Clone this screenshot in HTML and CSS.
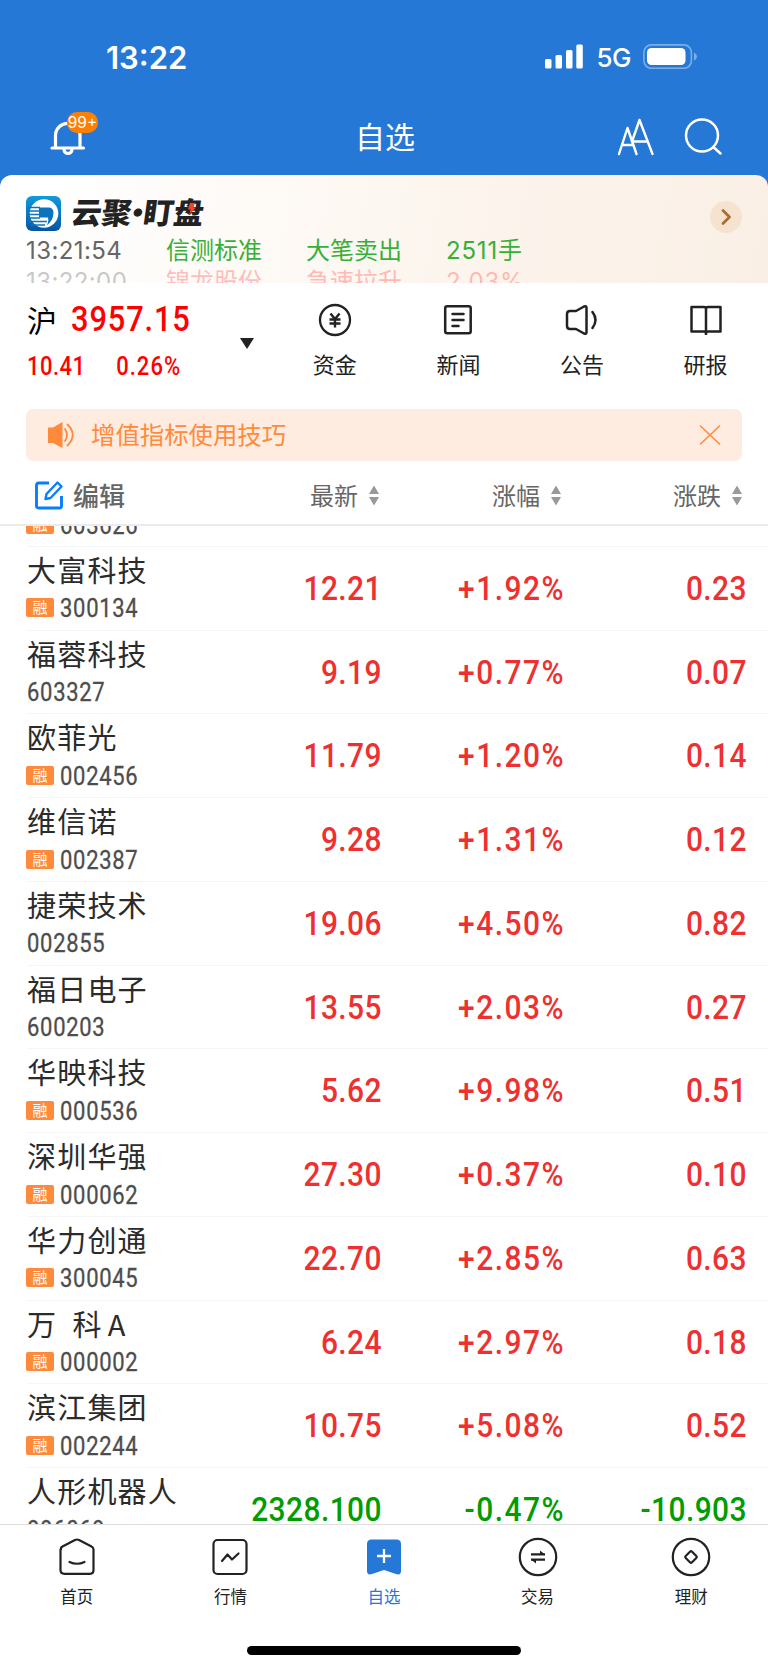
FILE: index.html
```html
<!DOCTYPE html>
<html lang="zh-CN">
<head>
    <meta charset="UTF-8">
    <meta name="viewport" content="width=device-width, initial-scale=1.0">
    <title>自选</title>
    <link rel="stylesheet" href="styles.css">
</head>
<body>
    <header class="top">
        <div class="status-bar">
            <span class="clock">13:22</span>
            <div class="status-right">
                <svg class="signal" width="38" height="25" viewBox="0 0 38 25" fill="#fff">
                    <rect x="0" y="15" width="6.5" height="9.5" rx="1.5"/>
                    <rect x="10.5" y="11" width="6.5" height="13.5" rx="1.5"/>
                    <rect x="21" y="6" width="6.5" height="18.5" rx="1.5"/>
                    <rect x="31.3" y="0.5" width="6.5" height="24" rx="1.5"/>
                </svg>
                <span class="network">5G</span>
                <svg width="54" height="25" viewBox="0 0 54 25">
                    <rect x="0.9" y="0.9" width="47.5" height="23.4" rx="7.5" fill="none" stroke="#fff" stroke-opacity="0.4" stroke-width="1.6"/>
                    <rect x="4" y="4" width="38.5" height="17" rx="4.5" fill="#fff"/>
                    <path d="M51 8.5q3 1.500 3 4t-3 4z" fill="#fff" fill-opacity="0.4"/>
                </svg>
            </div>
        </div>
        <div class="nav-bar">
            <div class="bell">
                <svg width="36" height="36" viewBox="0 0 36 36" fill="none" stroke="#fff" stroke-width="3.2" stroke-linecap="round">
                    <path d="M5.500 28V14.500A12.300 12.300 0 0 1 30 14.500V28M2 28h31.500"/>
                    <path d="M14 29.500a4 4 0 0 0 8 0"/>
                </svg>
                <span class="badge">99+</span>
            </div>
            <h1>自选</h1>
            <div class="nav-icons">
                <svg width="38" height="38" viewBox="0 0 38 38" fill="none" stroke="#fff" stroke-width="2.4" stroke-linecap="round" stroke-linejoin="round">
                    <path d="M3 36L11.500 10L20.500 36M6.500 27H17"/>
                    <path d="M16 23.500L23.500 2L36.500 36M17 23.500H31"/>
                </svg>
                <svg width="38" height="38" viewBox="0 0 38 38" fill="none" stroke="#fff" stroke-width="2.5" stroke-linecap="round">
                    <circle cx="18" cy="17.500" r="16"/>
                    <path d="M29.300 29L36.500 35.500"/>
                </svg>
            </div>
        </div>
    </header>

    <section class="promo">
        <div class="promo-title">
            <svg width="35" height="35" viewBox="0 0 35 35">
                <defs>
                    <linearGradient id="logo-bg" x1="0" y1="0" x2="0" y2="1">
                        <stop offset="0" stop-color="#0f9bdc"/>
                        <stop offset="1" stop-color="#0554a4"/>
                    </linearGradient>
                </defs>
                <rect width="35" height="35" rx="6" fill="url(#logo-bg)"/>
                <circle cx="18" cy="17.500" r="14.300" fill="#fff"/>
                <path d="M13 11.500H22.500Q27.500 11.500 27.500 17Q27 25.500 20.500 29.500Q23 26 22 21.500H13z" fill="#0a74bf"/>
                <path d="M2 11.500H14M2 15H14M2 18.500H14M2 22H14M3 25.500H21M5 29H19" stroke="#0a74bf" stroke-width="1.300"/>
            </svg>
            <strong class="promo-name">云聚<b>·</b>盯盘</strong>
            <svg class="bolt" width="8" height="12" viewBox="0 0 8 12"><path d="M2 0H7L5.500 4.500H8L1 12L3 6.500H0z" fill="#f5442e"/></svg>
        </div>
        <div class="promo-row sell"><time>13:21:54</time><span>信测标准</span><span>大笔卖出</span><span>2511手</span></div>
        <div class="promo-row buy"><time>13:22:00</time><span>锦龙股份</span><span>急速拉升</span><span>2.03%</span></div>
        <svg class="promo-more" width="32" height="32" viewBox="0 0 32 32" fill="none">
            <circle cx="16" cy="16" r="16" fill="#f5e3cf"/>
            <path d="M13 9.500L19.500 16L13 22.500" stroke="#aa6e32" stroke-width="2.800" stroke-linecap="round" stroke-linejoin="round"/>
        </svg>
    </section>

    <section class="market">
        <div class="index">
            <div class="index-main"><span class="index-name">沪</span><span class="index-value">3957.15</span></div>
            <div class="index-sub"><span>10.41</span><span>0.26%</span></div>
        </div>
        <div class="index-arrow"></div>
        <div class="shortcuts">
            <a class="shortcut">
                <svg width="36" height="36" viewBox="0 0 36 36" fill="none" stroke="#222" stroke-width="2.300">
                    <circle cx="18" cy="18" r="15"/>
                    <path d="M13.500 11.500L18 17L22.500 11.500M18 17V25.500M12.500 17.500H23.500M12.500 21.500H23.500" stroke-width="2.400"/>
                </svg>
                <span>资金</span>
            </a>
            <a class="shortcut">
                <svg width="36" height="36" viewBox="0 0 36 36" fill="none" stroke="#222" stroke-width="2.500" stroke-linecap="round">
                    <rect x="5.200" y="4.200" width="25.500" height="27" rx="2"/>
                    <path d="M12.500 12H23.500M12.500 18H23.500M12.500 24H18.500"/>
                </svg>
                <span>新闻</span>
            </a>
            <a class="shortcut">
                <svg width="36" height="36" viewBox="0 0 36 36" fill="none" stroke="#222" stroke-width="2.500" stroke-linecap="round" stroke-linejoin="round">
                    <path d="M3 12Q3 9 6 9H12L20 4.500Q22.500 3.500 22.500 6V30Q22.500 32.500 20 31.500L12 27H6Q3 27 3 24z"/>
                    <path d="M28.500 10Q34.500 18 28.500 26"/>
                </svg>
                <span>公告</span>
            </a>
            <a class="shortcut">
                <svg width="36" height="36" viewBox="0 0 36 36" fill="none" stroke="#222" stroke-width="2.500" stroke-linejoin="round">
                    <path d="M18 7Q18 5 16 5H3.500V29.500H16Q18 29.500 18 31.500Q18 29.500 20 29.500H32.500V5H20Q18 5 18 7V33"/>
                </svg>
                <span>研报</span>
            </a>
        </div>
    </section>

    <div class="notice">
        <svg width="28" height="28" viewBox="0 0 28 28" fill="#ff8a3c">
            <path d="M1 6.500H6L15.500 1V27L6 22H1z"/>
            <path d="M18 8Q22 14 18 20M20.500 3.500Q31 14 20.500 24.500" fill="none" stroke="#ff8a3c" stroke-width="1.800" stroke-linecap="round"/>
        </svg>
        <span>增值指标使用技巧</span>
        <svg class="close" width="22" height="20" viewBox="0 0 22 20" fill="none" stroke="#ff8a3c" stroke-width="1.600" stroke-linecap="round"><path d="M1.500 1L20.500 19M20.500 1L1.500 19"/></svg>
    </div>

    <div class="list-head">
        <div class="edit">
            <svg width="30" height="30" viewBox="0 0 30 30" fill="none" stroke="#0a7dff" stroke-width="2.900" stroke-linejoin="round">
                <path d="M15 3H5Q2.500 3 2.500 5.500V26Q2.500 28 5 28H25.500Q27.500 28 27.500 26V16"/>
                <path d="M23.500 2.500L27.500 6.500L16.500 18L11.500 19L12.500 14z" stroke-width="2.400"/>
            </svg>
            <span>编辑</span>
        </div>
        <div class="sort col-price">最新<i></i></div>
        <div class="sort col-pct">涨幅<i></i></div>
        <div class="sort col-change">涨跌<i></i></div>
    </div>

    <main class="stocks" id="stocks"></main>

    <nav class="tabs">
        <a class="tab">
            <svg width="40" height="40" viewBox="0 0 40 40" fill="none" stroke="#222" stroke-width="2.200" stroke-linecap="round">
                <path d="M4 12.500Q3.500 10.500 5.500 9.500L18 3Q20 2 22 3L34.500 9.500Q36.500 10.500 36.500 12.500V33Q36.500 36.800 33 36.800H7.500Q3.500 36.800 3.500 33V12.500"/>
                <path d="M12.500 25Q20 28.500 27.500 25"/>
            </svg>
            <span>首页</span>
        </a>
        <a class="tab">
            <svg width="40" height="40" viewBox="0 0 40 40" fill="none" stroke="#222" stroke-width="2.200" stroke-linecap="round" stroke-linejoin="round">
                <rect x="3.500" y="3" width="33" height="34" rx="4"/>
                <path d="M12 24L17.500 17.500L22 22.500L28.500 16.500"/>
            </svg>
            <span>行情</span>
        </a>
        <a class="tab active">
            <svg width="40" height="40" viewBox="0 0 40 40">
                <path d="M3 7Q3 2.500 7.500 2.500H32.500Q37 2.500 37 7V34Q37 38.500 32 37L20 33L8 37Q3 38.500 3 34z" fill="#2678d6"/>
                <path d="M13 19H27M20 12V26" stroke="#fff" stroke-width="2.300"/>
            </svg>
            <span>自选</span>
        </a>
        <a class="tab">
            <svg width="40" height="40" viewBox="0 0 40 40" fill="none" stroke="#222" stroke-width="2.200">
                <circle cx="20" cy="20" r="18.200"/>
                <path d="M13 17.300H27M27 22.700H13"/>
                <path d="M22 13.500L27 17.500H22zM18 26.500L13 22.500H18z" fill="#222" stroke="none"/>
            </svg>
            <span>交易</span>
        </a>
        <a class="tab">
            <svg width="40" height="40" viewBox="0 0 40 40" fill="none" stroke="#222" stroke-width="2.200" stroke-linejoin="round">
                <circle cx="20" cy="20" r="18.200"/>
                <rect x="15.500" y="15.500" width="9" height="9" rx="1.500" transform="rotate(45 20 20)"/>
            </svg>
            <span>理财</span>
        </a>
    </nav>
    <div class="home-bar"></div>

    <script>
        // name, code, margin trading flag, price, percent, change
        const stocks = [
            ["", "603626", true, "", "", ""],
            ["大富科技", "300134", true, "12.21", "+1.92%", "0.23"],
            ["福蓉科技", "603327", false, "9.19", "+0.77%", "0.07"],
            ["欧菲光", "002456", true, "11.79", "+1.20%", "0.14"],
            ["维信诺", "002387", true, "9.28", "+1.31%", "0.12"],
            ["捷荣技术", "002855", false, "19.06", "+4.50%", "0.82"],
            ["福日电子", "600203", false, "13.55", "+2.03%", "0.27"],
            ["华映科技", "000536", true, "5.62", "+9.98%", "0.51"],
            ["深圳华强", "000062", true, "27.30", "+0.37%", "0.10"],
            ["华力创通", "300045", true, "22.70", "+2.85%", "0.63"],
            ["万  科<em>A</em>", "000002", true, "6.24", "+2.97%", "0.18"],
            ["滨江集团", "002244", true, "10.75", "+5.08%", "0.52"],
            ["人形机器人", "886069", false, "2328.100", "-0.47%", "-10.903"]
        ];

        document.getElementById("stocks").innerHTML = stocks.map(([name, code, margin, price, pct, change]) => `
            <div class="stock ${pct.startsWith("-") ? "down" : ""}">
                <div class="who">
                    <div class="name">${name}</div>
                    <div class="code">${margin ? '<span class="tag">融</span>' : ""}<span class="num">${code}</span></div>
                </div>
                <div class="num val col-price">${price}</div>
                <div class="num val col-pct">${pct}</div>
                <div class="num val col-change">${change}</div>
            </div>`).join("");
    </script>
</body>
</html>
```
FILE: styles.css
```css
* {
    box-sizing: border-box;
}
body {
    margin: 0;
    width: 768px;
    height: 1669px;
    overflow: hidden;
    display: flex;
    flex-direction: column;
    background: #fff;
    color: #222;
    font-family: "Noto Sans CJK SC", sans-serif;
}
svg {
    display: block;
    flex: none;
}
.top {
    flex: none;
    height: 187px;
    margin-bottom: -12px;
    background: #2678d6;
    color: #fff;
}
.status-bar {
    display: flex;
    justify-content: space-between;
    height: 98px;
    padding: 42px 71px 0 106px;
}
.clock {
    font: 600 31px/32px Inter, sans-serif;
}
.status-right {
    display: flex;
    height: 29px;
    align-items: center;
}
.network {
    margin: 3px 12px 0 13px;
    font: 500 26px/26px Inter, sans-serif;
    letter-spacing: -0.5px;
}
.nav-bar {
    display: grid;
    grid-template-columns: 1fr auto 1fr;
    align-items: center;
    height: 77px;
    padding: 0 46px 0 50px;
}
.bell {
    position: relative;
    padding-top: 3px;
}
.badge {
    position: absolute;
    left: 17px;
    top: -5px;
    width: 31px;
    height: 21px;
    border-radius: 10px;
    background: #ff8000;
    font: 15.5px/22px Inter, sans-serif;
    text-align: center;
}
h1 {
    margin: 0 2px 4px 0;
    font-size: 30px;
    font-weight: 400;
    line-height: 40px;
}
.nav-icons {
    display: flex;
    justify-content: flex-end;
    gap: 30px;
}
.promo {
    position: relative;
    flex: none;
    height: 108px;
    padding: 20px 26px 0;
    overflow: hidden;
    border-radius: 12px 12px 0 0;
    background: linear-gradient(100deg, #fff 5%, #fcf4ec 65%, #f9efe5);
}
.promo-title {
    display: flex;
    align-items: center;
    height: 36px;
}
.promo-name {
    margin: -4px 0 0 11px;
    font-size: 30px;
    font-weight: 900;
    line-height: 36px;
    transform: skewX(-8deg);
    white-space: nowrap;
}
.promo-name b {
    display: inline-block;
    width: 12px;
    text-indent: -9px;
}
.bolt {
    margin-left: -16px;
    margin-top: -9px;
    z-index: 1;
}
.promo-row {
    display: grid;
    grid-template-columns: 140px 140px 140px 1fr;
    height: 31px;
    font: 24px/39px Inter, "Noto Sans CJK SC", sans-serif;
}
.promo-row time {
    color: #666;
    letter-spacing: 0.4px;
}
.promo-row span:last-child {
    letter-spacing: 0.8px;
}
.promo-row.sell {
    color: #37b037;
}
.promo-row.buy {
    opacity: 0.35;
    color: #ff4d4d;
}
.promo-more {
    position: absolute;
    right: 26px;
    top: 26px;
}
.market {
    display: flex;
    flex: none;
    height: 126px;
}
.index {
    width: 212px;
    padding: 12px 0 0 27px;
    color: red;
}
.index-main {
    display: flex;
    align-items: center;
    height: 50px;
}
.index-name {
    width: 44px;
    margin-top: -3px;
    font-size: 30px;
    color: #000;
}
.index-value {
    font: 500 35px/54px Roboto, sans-serif;
    transform: scaleX(0.88);
    transform-origin: left;
    letter-spacing: 1px;
}
.index-sub {
    display: flex;
    gap: 35px;
    font: 500 25px/44px Roboto, sans-serif;
    transform: scaleX(0.88);
    transform-origin: left;
    letter-spacing: 0.5px;
}
.index-sub span:last-child {
    letter-spacing: 1.2px;
}
.index-arrow {
    align-self: flex-start;
    margin: 55px 0 0 28px;
    border: 7px solid transparent;
    border-top: 11px solid #222;
    border-bottom: 0;
}
.shortcuts {
    display: flex;
    flex: 1;
    padding-left: 19px;
}
.shortcut {
    display: flex;
    flex-direction: column;
    align-items: center;
    width: 123.6px;
    padding-top: 19px;
    font-size: 22px;
    line-height: 32px;
}
.shortcut span {
    margin-top: 9px;
}
.notice {
    display: flex;
    align-items: center;
    flex: none;
    height: 52px;
    margin: 0 26px;
    padding: 0 21px;
    border-radius: 7px;
    background: #ffece0;
    color: #ff8a3c;
    font-size: 24.4px;
}
.notice span {
    margin: -3px 0 0 16px;
}
.close {
    margin-left: auto;
}
.list-head {
    position: relative;
    display: flex;
    flex: none;
    align-items: center;
    height: 65px;
    padding-top: 4px;
    border-bottom: 2px solid #ebebeb;
    color: #666;
    font-size: 24px;
}
.edit {
    display: flex;
    align-items: center;
    gap: 9px;
    width: 180px;
    padding-left: 34px;
    font-size: 26px;
    font-weight: 500;
}
.sort {
    display: flex;
    align-items: center;
    justify-content: flex-end;
    line-height: 34px;
}
.sort i {
    width: 10px;
    height: 20px;
    margin: 2px 0 0 11px;
    background: #999;
    clip-path: polygon(50% 0, 100% 42%, 0 42%, 0 58%, 100% 58%, 50% 100%, 0 58%, 0 42%);
}
.list-head .col-price {
    width: 199px;
}
.list-head .col-pct {
    width: 182px;
}
.list-head .col-change {
    width: 181px;
}
.stocks {
    flex: 1;
    min-height: 0;
    overflow: hidden;
}
.stock {
    display: flex;
    height: 83.75px;
    margin-left: 27px;
    border-bottom: 1px solid #f5f5f5;
    color: #ee3030;
}
.stock:first-child {
    margin-top: -63px;
}
.down {
    color: #009c00;
}
.who {
    width: 175px;
    padding-top: 1px;
}
.name {
    height: 43px;
    color: #2b2b2b;
    font-size: 29px;
    line-height: 42px;
    letter-spacing: 1.2px;
    white-space: pre;
}
.name em {
    margin-left: 5px;
    font-style: normal;
}
.code {
    display: flex;
    align-items: center;
    gap: 6px;
    height: 34px;
    color: #4d4d4d;
}
.num {
    font-family: Roboto, sans-serif;
}
.code .num {
    font-size: 25px;
    padding-top: 2px;
    transform: scaleX(0.88);
    transform-origin: left;
    letter-spacing: 0.8px;
    -webkit-text-stroke: 0.3px #4d4d4d;
}
.tag {
    width: 28px;
    height: 19px;
    margin-left: -1px;
    border-radius: 2px;
    background: #ff8a3c;
    color: #fff;
    font-size: 15px;
    line-height: 18px;
    text-align: center;
}
.val {
    font-size: 34px;
    font-weight: 500;
    line-height: 83px;
    text-align: right;
    letter-spacing: 0.5px;
    transform: scaleX(0.88);
    transform-origin: right;
}
.stock .col-price {
    width: 180px;
}
.stock .col-pct {
    width: 183px;
    letter-spacing: 1.7px;
}
.stock .col-change {
    width: 182px;
}
.tabs {
    display: flex;
    flex: none;
    height: 96px;
    border-top: 1px solid #ddd;
}
.tab {
    display: flex;
    flex: 1;
    flex-direction: column;
    align-items: center;
    padding-top: 12px;
    font-size: 16.5px;
    line-height: 24px;
}
.tab span {
    margin-top: 7px;
}
.active {
    color: #2678d6;
}
.home-bar {
    flex: none;
    width: 274px;
    height: 9px;
    margin: 26px auto 14px;
    border-radius: 5px;
    background: #000;
}
```
